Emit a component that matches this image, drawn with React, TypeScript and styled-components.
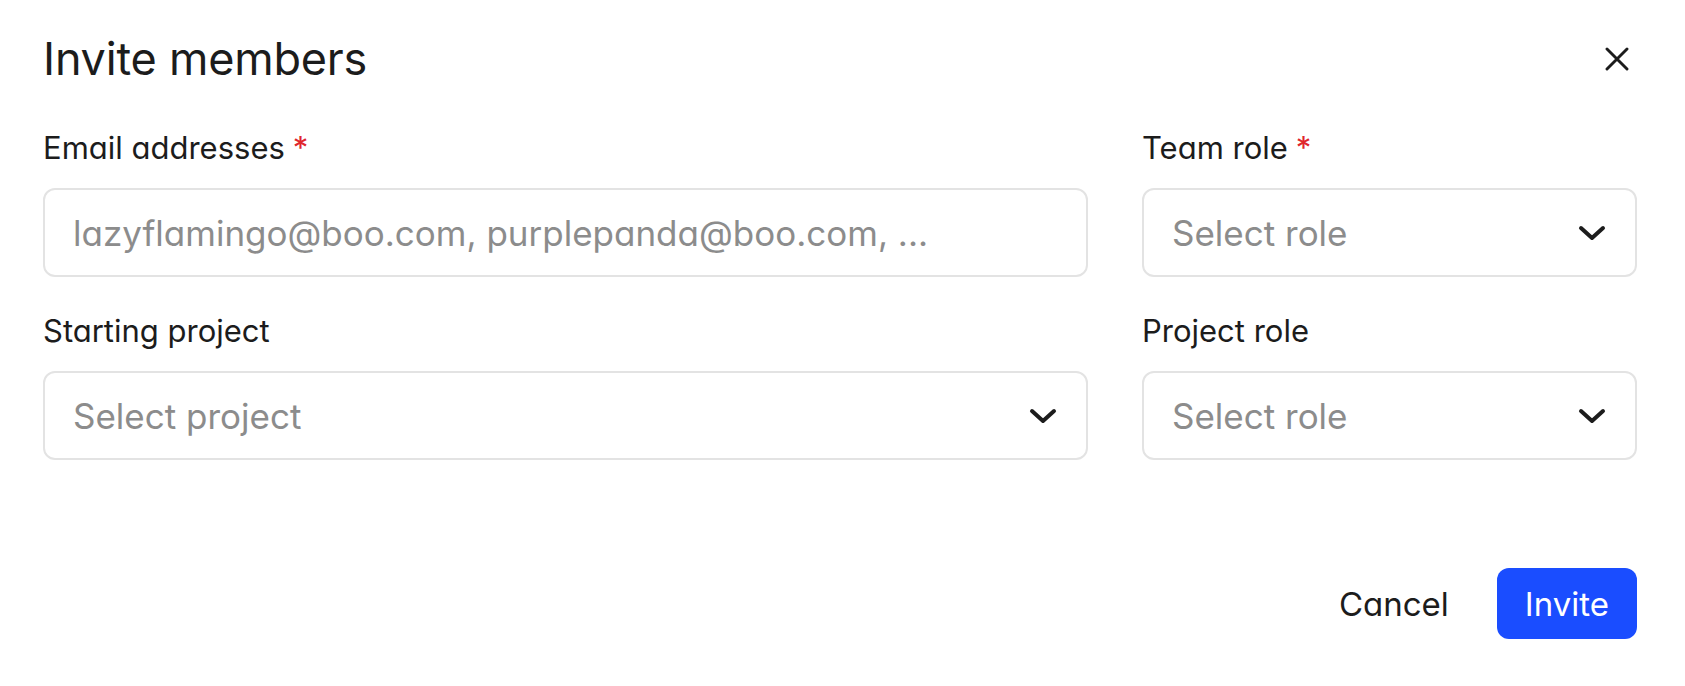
import styled, { createGlobalStyle } from "styled-components";

const GlobalStyle = createGlobalStyle`
  html, body {
    margin: 0;
    padding: 0;
    background: #ffffff;
  }
  body {
    font-family: Inter, "Noto Sans", "Liberation Sans", sans-serif;
    font-feature-settings: "cv11";
    color: #1c1c1c;
  }
`;

const Page = styled.div`
  width: 1685px;
  height: 686px;
  box-sizing: border-box;
  padding: 33px 48px 0 43px;
  display: flex;
  flex-direction: column;
`;

const Header = styled.div`
  display: flex;
  align-items: center;
  justify-content: space-between;
  height: 52px;
`;

const Title = styled.h1`
  margin: 0;
  font-size: 45px;
  line-height: 52px;
  font-weight: 400;
  letter-spacing: -0.2px;
  color: #1c1c1c;
`;

const CloseButton = styled.button`
  width: 40px;
  height: 40px;
  padding: 0;
  border: none;
  background: transparent;
  display: flex;
  align-items: center;
  justify-content: center;
  color: #1c1c1c;
  cursor: pointer;
`;

const FormGrid = styled.div`
  margin-top: 45px;
  display: grid;
  grid-template-columns: 1fr 495px;
  column-gap: 54px;
  row-gap: 36px;
`;

const Field = styled.div`
  display: flex;
  flex-direction: column;
  gap: 22px;
`;

const Label = styled.label`
  font-size: 31px;
  line-height: 36px;
  font-weight: 400;
  color: #1c1c1c;
`;

const Required = styled.span`
  color: #e0262c;
  margin-left: 8px;
`;

const Control = styled.div`
  height: 89px;
  box-sizing: border-box;
  border: 2px solid #e3e3e3;
  border-radius: 12px;
  padding: 0 29px 0 28px;
  display: flex;
  align-items: center;
  justify-content: space-between;
  background: #ffffff;
`;

const Placeholder = styled.span`
  font-size: 35px;
  color: #8c8c8c;
  white-space: nowrap;
`;

const Footer = styled.div`
  margin-top: 108px;
  display: flex;
  justify-content: flex-end;
  align-items: center;
  gap: 24px;
`;

const Button = styled.button<{ $primary?: boolean }>`
  height: 71px;
  box-sizing: border-box;
  padding: 0 ${(p) => (p.$primary ? "28px" : "24px")};
  border: none;
  border-radius: 12px;
  font-family: inherit;
  font-feature-settings: "cv11";
  font-size: 33px;
  font-weight: 400;
  background: ${(p) => (p.$primary ? "#1a4dff" : "transparent")};
  color: ${(p) => (p.$primary ? "#ffffff" : "#1c1c1c")};
  cursor: pointer;
`;

const Chevron = () => (
  <svg width="28" height="16" viewBox="0 0 28 16" fill="none">
    <path
      d="M3 3 L14 13 L25 3"
      stroke="#1c1c1c"
      strokeWidth="4"
      strokeLinecap="round"
      strokeLinejoin="round"
    />
  </svg>
);

const CloseIcon = () => (
  <svg width="24" height="24" viewBox="0 0 24 24" fill="none">
    <path
      d="M2 2 L22 22 M22 2 L2 22"
      stroke="#1c1c1c"
      strokeWidth="2.9"
      strokeLinecap="round"
    />
  </svg>
);

function App() {
  return (
    <>
      <GlobalStyle />
      <Page>
        <Header>
          <Title>Invite members</Title>
          <CloseButton aria-label="Close">
            <CloseIcon />
          </CloseButton>
        </Header>
        <FormGrid>
          <Field>
            <Label>
              Email addresses<Required>*</Required>
            </Label>
            <Control>
              <Placeholder>
                lazyflamingo@boo.com, purplepanda@boo.com, ...
              </Placeholder>
            </Control>
          </Field>
          <Field>
            <Label>
              Team role<Required>*</Required>
            </Label>
            <Control>
              <Placeholder>Select role</Placeholder>
              <Chevron />
            </Control>
          </Field>
          <Field>
            <Label>Starting project</Label>
            <Control>
              <Placeholder>Select project</Placeholder>
              <Chevron />
            </Control>
          </Field>
          <Field>
            <Label>Project role</Label>
            <Control>
              <Placeholder>Select role</Placeholder>
              <Chevron />
            </Control>
          </Field>
        </FormGrid>
        <Footer>
          <Button>Cancel</Button>
          <Button $primary>Invite</Button>
        </Footer>
      </Page>
    </>
  );
}

export default App;
